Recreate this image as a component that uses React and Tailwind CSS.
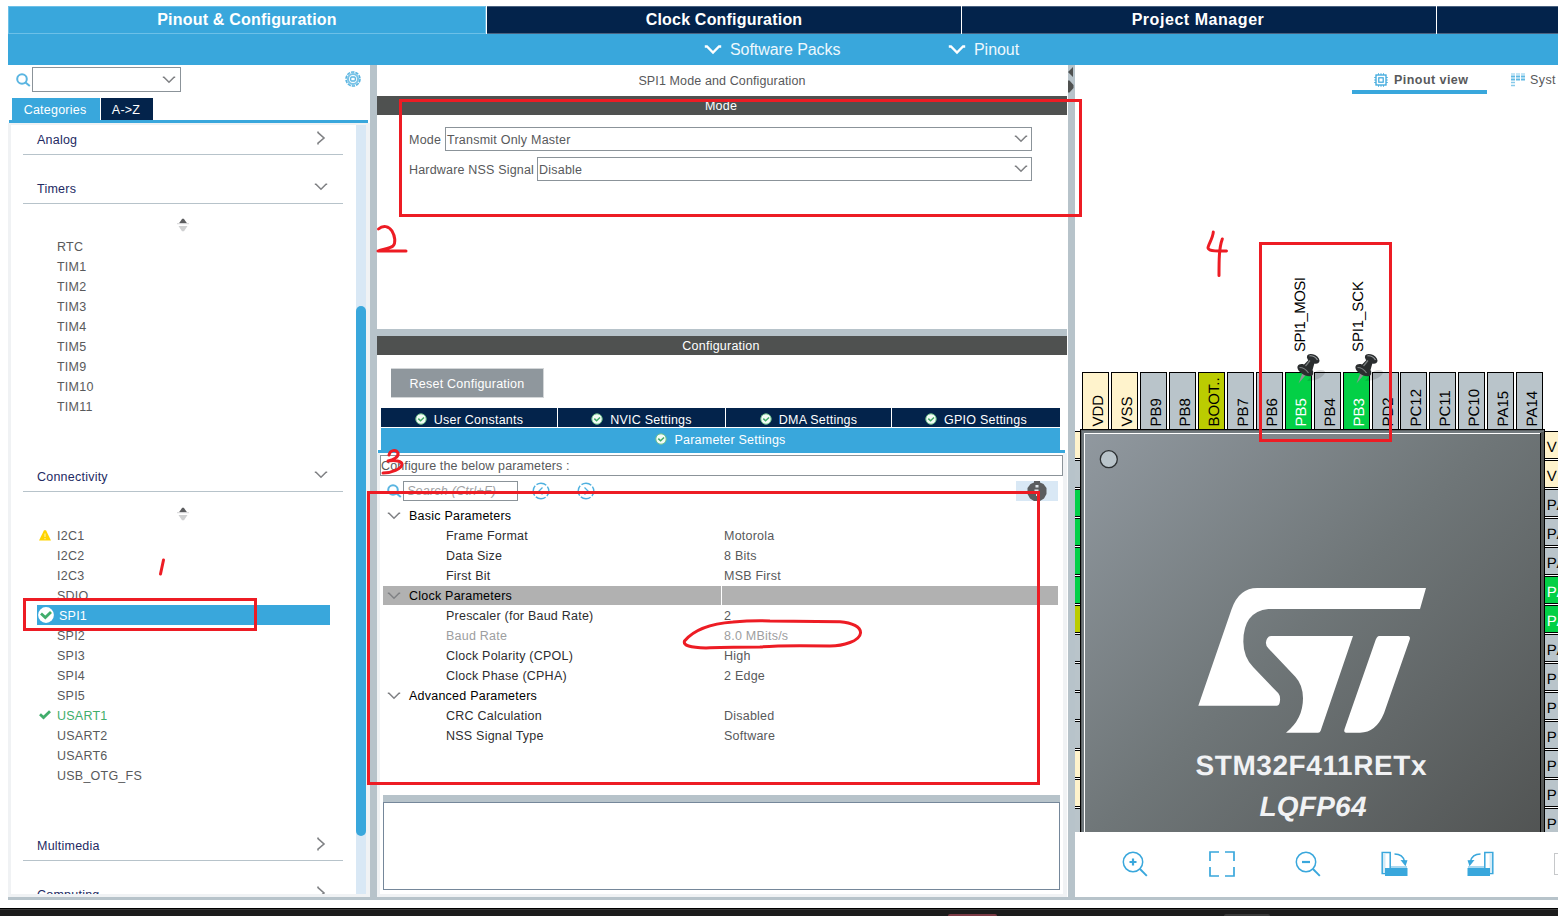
import React from "react";

const cx = (...c) => c.filter(Boolean).join(" ");

/* ---------- small icons ---------- */

const ChevronDown = ({ className = "text-[#808285]" }) => (
  <svg width="14" height="8" viewBox="0 0 14 8" className={cx("shrink-0", className)} fill="none" stroke="currentColor" strokeWidth="1.5">
    <path d="M.8 1.200h1.200L7 6.300 12 1.200h1.200" />
  </svg>
);

const ChevronRight = () => (
  <svg width="9" height="14" viewBox="0 0 9 14" className="shrink-0 text-[#808285]" fill="none" stroke="currentColor" strokeWidth="1.6">
    <path d="M1 .6v1L7 7 1 12.2v1.2" />
  </svg>
);

const SearchIcon = () => (
  <svg width="15" height="14" viewBox="0 0 15 14" className="shrink-0" fill="none" stroke="#5ab5e1" strokeWidth="2">
    <circle cx="6" cy="6" r="4.8" />
    <path d="M9.500 9.400l4.300 3.600" />
  </svg>
);

const GearIcon = () => (
  <svg width="16" height="16" viewBox="0 0 16 16" fill="none" stroke="#5ab5e1">
    <circle cx="8" cy="8" r="7" strokeWidth="1.6" strokeDasharray="3.4 1" />
    <circle cx="8" cy="8" r="5" strokeWidth="2.2" strokeOpacity=".8" />
    <rect x="5.7" y="6" width="4.6" height="4" rx="1" strokeWidth="1.3" />
  </svg>
);

const SortIcon = () => (
  <svg width="12" height="14" viewBox="0 0 12 14">
    <path d="M2 5.2L5.2.8h1.6L10 5.2z" fill="#5d5e60" />
    <path d="M0 5.7h12" stroke="#d5d6d7" />
    <path d="M1.500 8h9L7 13.2H5z" fill="#cfd0d1" />
  </svg>
);

const WarningIcon = () => (
  <svg width="12" height="11" viewBox="0 0 12 11">
    <path d="M5 .3h2L12 10.600H0z" fill="#ffd400" />
    <path d="M6 3.500v3.500M6 8v1.300" stroke="#fff3a8" strokeWidth="1.100" />
  </svg>
);

const CheckIcon = () => (
  <svg width="12" height="10" viewBox="0 0 12 10" fill="none" stroke="#41ad6b" strokeWidth="2.800">
    <path d="M1 4.300l3.500 3.200L11 1.200" />
  </svg>
);

const CheckDisc = () => (
  <svg width="16" height="16" viewBox="0 0 16 16" fill="none">
    <circle cx="8" cy="8" r="7.900" fill="#fff" />
    <path d="M3 6.500l4.300 4L13 5" stroke="#41ad6b" strokeWidth="2.800" />
  </svg>
);

const TabCheck = () => (
  <svg width="12" height="12" viewBox="0 0 12 12" fill="none" className="shrink-0">
    <circle cx="6" cy="6" r="5.200" fill="#f2fbf4" stroke="#6fc18c" strokeWidth="1" />
    <path d="M3.300 5.600l2.300 2.200 3.400-3.300" stroke="#3fa866" strokeWidth="1.500" />
  </svg>
);

const NavCircle = ({ next, className }) => (
  <svg width="18" height="18" viewBox="0 0 18 18" fill="none" stroke="#4eb0df" className={cx("shrink-0", className)}>
    <circle cx="9" cy="9" r="7.800" strokeWidth="1.400" strokeDasharray="10.500 1.750" strokeDashoffset="5" />
    <path d={next ? "M7.500 5.500L11 9l-3.500 3.500" : "M10.500 5.500L7 9l3.500 3.500"} strokeWidth="1.300" />
  </svg>
);

const InfoIcon = () => (
  <svg width="20" height="20" viewBox="0 0 20 20">
    <path d="M7 0h6v1.500l3.500 1.500L19.500 7v6L17 17.500 13 20H7L3 17.500.5 13V7L3.500 3 7 1.500z" fill="#5b5d5f" />
    <path d="M8.500 4h3v2.500h-3zM7.500 8.500h4V15H9V10H7.500z" fill="#dfe5ea" />
  </svg>
);

const ChipIcon = () => (
  <svg width="14" height="14" viewBox="0 0 14 14" fill="none" stroke="#39a7dc">
    <rect x="2" y="2" width="10" height="10" strokeWidth="1.300" />
    <rect x="4.800" y="4.800" width="4.400" height="4.400" strokeWidth="1.200" />
    <path d="M4.500 0v2M7 0v2M9.500 0v2M4.500 12v2M7 12v2M9.500 12v2M0 4.500h2M0 7h2M0 9.500h2M12 4.500h2M12 7h2M12 9.500h2" strokeWidth="1" strokeOpacity=".7" />
  </svg>
);

const SystemIcon = () => (
  <svg width="14" height="14" viewBox="0 0 14 14" stroke="#39a7dc" fill="none">
    <path d="M0 1h14" strokeWidth="1.400" strokeOpacity=".4" strokeDasharray="4 1" />
    <path d="M0 3.500h14M0 6.500h14" strokeWidth="1.800" strokeOpacity=".8" strokeDasharray="4 1" />
    <path d="M0 9.500h4M0 12.500h4" strokeWidth="1.600" strokeOpacity=".6" />
  </svg>
);

const ZoomGlyph = ({ plus }) => (
  <svg width="26" height="26" viewBox="0 0 26 26" fill="none" stroke="#39a7dc">
    <circle cx="11" cy="11" r="9.700" strokeWidth="1.500" />
    <path d="M18 18l6.800 6.800" strokeWidth="1.900" />
    <path d={plus ? "M7.500 11h7M11 7.500v7" : "M7 11h8"} strokeWidth="2.200" />
  </svg>
);

const FitGlyph = () => (
  <svg width="26" height="26" viewBox="0 0 26 26" fill="none" stroke="#39a7dc" strokeWidth="1.700">
    <path d="M1 10V1h9M16 1h9v9M25 16v9h-9M10 25H1v-9" />
  </svg>
);

const RotateGlyph = ({ flip }) => (
  <svg width="27" height="26" viewBox="0 0 27 26" fill="none" className={flip ? "-scale-x-100" : ""}>
    <rect x="10" y="15" width="16" height="3" fill="#a9d8f0" />
    <rect x="1.200" y="1.500" width="8" height="21" stroke="#39a7dc" strokeWidth="1.500" />
    <rect x="2" y="2.500" width="2.500" height="19" fill="#d4ebf7" />
    <rect x="4" y="17" width="22.500" height="8" fill="#39a7dc" />
    <path d="M13.500 3c5.500 0 9 2.500 10 7.500" stroke="#39a7dc" strokeWidth="1.500" />
    <path d="M19.500 9l7 .2-2 6z" fill="#39a7dc" />
  </svg>
);

/* ---------- header ---------- */

const Header = () => (
  <header className="ml-2 shrink-0 pt-1.5 text-white">
    <nav className="flex h-7 gap-px text-base font-bold tracking-[0.2px]">
      <div className="flex w-[478px] items-center justify-center border border-[#6cc0e8] bg-[#39a7dc]">Pinout &amp; Configuration</div>
      <div className="flex w-[474px] items-center justify-center border-y border-[#4a6280] bg-[#03234b]">Clock Configuration</div>
      <div className="flex w-[474px] items-center justify-center border-y border-[#4a6280] bg-[#03234b] pr-0.5 tracking-[0.55px]">Project Manager</div>
      <div className="flex-1 border-y border-[#4a6280] bg-[#03234b]" />
    </nav>
    <div className="flex h-[31px] items-center bg-[#39a7dc] pl-[696px] text-base tracking-[-0.05px]">
      <Drop label="Software Packs" className="w-[244px]" />
      <Drop label="Pinout" />
    </div>
  </header>
);

const Drop = ({ label, className }) => (
  <div className={cx("flex items-center gap-2 text-[#eef8fd]", className)}>
    <svg width="18" height="11" viewBox="0 0 18 11" fill="none" stroke="#fff" strokeWidth="2.300">
      <path d="M.8 2.500h2.200l6 6 6-6h2.200" />
    </svg>
    <span>{label}</span>
  </div>
);

/* ---------- category tree ---------- */

const TIMERS = ["RTC", "TIM1", "TIM2", "TIM3", "TIM4", "TIM5", "TIM9", "TIM10", "TIM11"];
const CONNECTIVITY = [
  ["I2C1", "warn"], ["I2C2"], ["I2C3"], ["SDIO"], ["SPI1", "selected"], ["SPI2"], ["SPI3"],
  ["SPI4"], ["SPI5"], ["USART1", "ok"], ["USART2"], ["USART6"], ["USB_OTG_FS"],
];

const Category = ({ label, open, className }) => (
  <div className={cx("ml-3 flex h-[30px] w-[320px] shrink-0 items-center justify-between border-b border-[#b7c3ca] pl-3.5 text-[#232a63]", className)}>
    <span>{label}</span>
    <span className={cx("mb-1 flex justify-center", open ? "mr-[15px]" : "mr-[17px]")}>{open ? <ChevronDown /> : <ChevronRight />}</span>
  </div>
);

const Peripheral = ({ label, state }) => (
  <li
    className={cx(
      "ml-[26px] flex h-5 w-[293px] items-center",
      state === "selected" && "bg-[#39a7dc] text-white",
      state === "ok" && "text-[#41ad6b]"
    )}
  >
    <span className={cx("flex shrink-0", state === "selected" ? "w-[22px] pl-px" : "w-5 pl-0.5")}>
      {state === "warn" && <WarningIcon />}
      {state === "selected" && <CheckDisc />}
      {state === "ok" && <CheckIcon />}
    </span>
    <span className="pt-px">{label}</span>
  </li>
);

const Sidebar = () => (
  <aside className="flex w-[362px] shrink-0 flex-col">
    <div className="flex h-[33px] items-start pl-2 pt-0.5">
      <div className="mt-[6px] flex w-4"><SearchIcon /></div>
      <div className="flex h-[25px] w-[149px] items-center justify-end border border-[#8b9399] pr-1">
        <ChevronDown />
      </div>
      <div className="ml-[164px] mt-1"><GearIcon /></div>
    </div>
    <div className="ml-1 flex h-[22px] gap-px text-white">
      <div className="flex w-[88px] items-center justify-center bg-[#39a7dc] pr-0.5 pt-px">Categories</div>
      <div className="flex w-[52px] items-center justify-center bg-[#03234b] pr-0.5 pt-px">A-&gt;Z</div>
    </div>
    <div className="ml-px h-[3px] w-[359px] shrink-0 bg-[#39a7dc]" />
    <div className="flex min-h-0 flex-1 border-x-[3px] border-b-[3px] border-t-2 border-r-4 border-[#f0f2f4]">
      <div className="flex min-w-0 flex-1 flex-col overflow-hidden">
        <Category label="Analog" />
        <Category label="Timers" open className="mt-[19px]" />
        <div className="flex h-8 shrink-0 justify-center pr-0.5 pt-3.5"><SortIcon /></div>
        <ul className="shrink-0">{TIMERS.map((t) => <Peripheral key={t} label={t} />)}</ul>
        <Category label="Connectivity" open className="mt-[46px]" />
        <div className="flex h-[33px] shrink-0 justify-center pr-0.5 pt-[15px]"><SortIcon /></div>
        <ul className="shrink-0">{CONNECTIVITY.map(([t, s]) => <Peripheral key={t} label={t} state={s} />)}</ul>
        <Category label="Multimedia" className="mt-[46px]" />
        <Category label="Computing" className="mt-[19px]" />
      </div>
      <div className="w-2.5 bg-[#d9e8f5] pt-[181px]">
        <div className="h-[530px] rounded-full bg-[#39a7dc]" />
      </div>
    </div>
  </aside>
);

/* ---------- SPI1 settings ---------- */

const BarTitle = ({ children }) => (
  <div className="flex h-[19px] shrink-0 items-center justify-center bg-[#4f5150] pr-0.5 text-white">{children}</div>
);

const SelectRow = ({ label, value, labelClass }) => (
  <div className="flex h-6 items-center">
    <span className={cx("shrink-0 whitespace-nowrap pt-px", labelClass)}>{label}</span>
    <div className="flex h-full flex-1 items-center justify-between border border-[#8b9399] pl-px pr-[3px]">
      <span className="pt-px">{value}</span>
      <ChevronDown />
    </div>
  </div>
);

const PARAMS = [
  { group: "Basic Parameters" },
  { name: "Frame Format", value: "Motorola" },
  { name: "Data Size", value: "8 Bits" },
  { name: "First Bit", value: "MSB First" },
  { group: "Clock Parameters", active: true },
  { name: "Prescaler (for Baud Rate)", value: "2" },
  { name: "Baud Rate", value: "8.0 MBits/s", disabled: true },
  { name: "Clock Polarity (CPOL)", value: "High" },
  { name: "Clock Phase (CPHA)", value: "2 Edge" },
  { group: "Advanced Parameters" },
  { name: "CRC Calculation", value: "Disabled" },
  { name: "NSS Signal Type", value: "Software" },
];

const ParamRow = ({ p }) =>
  p.group ? (
    <div className={cx("mb-px flex h-[19px] items-center text-black", p.active && "bg-[#b1b1b1]")}>
      <div className={cx("flex h-full w-[339px] items-center gap-2 border-r pl-1", p.active ? "border-white" : "border-transparent")}>
        <ChevronDown />
        {p.group}
      </div>
    </div>
  ) : (
    <div className={cx("flex h-5 items-center", p.disabled ? "text-[#9d9ea0]" : "text-[#2d2d2f]")}>
      <span className="w-[341px] pl-[63px]">{p.name}</span>
      <span className={p.disabled ? "" : "text-[#58595b]"}>{p.value}</span>
    </div>
  );

const TABS = [["User Constants", "w-44"], ["NVIC Settings", "w-[167px]"], ["DMA Settings", "w-[165px]"], ["GPIO Settings", "w-[168px]"]];

const Settings = () => (
  <section className="flex w-[691px] shrink-0 flex-col pr-px">
    <div className="flex h-[31px] items-center justify-center tracking-[0.12px]">SPI1 Mode and Configuration</div>
    <BarTitle>Mode</BarTitle>
    <div className="flex h-[214px] shrink-0 flex-col gap-1.5 pl-8 pr-[35px] pt-3">
      <SelectRow label="Mode" value="Transmit Only Master" labelClass="w-9" />
      <SelectRow label="Hardware NSS Signal" value="Disable" labelClass="w-32 tracking-[0.18px]" />
    </div>
    <div className="h-[7px] shrink-0 bg-[#b7c3ca]" />
    <BarTitle>Configuration</BarTitle>
    <div className="flex h-[53px] shrink-0 pl-3.5 pt-[13px]">
      <button className="flex h-[30px] w-[153px] items-center justify-center border border-l-0 border-[#d3d6d8] bg-[#8f979d] pt-px text-white">Reset Configuration</button>
    </div>
    <div className="ml-1 mr-[7px] flex h-[19px] shrink-0 gap-px text-white">
      {TABS.map(([t, w]) => (
        <div key={t} className={cx("flex items-center justify-center gap-[7px] bg-[#03234b] pt-[3px]", w)}>
          <TabCheck />
          <span className="pt-px">{t}</span>
        </div>
      ))}
    </div>
    <div className="ml-1 mr-[7px] mt-px flex h-[22px] shrink-0 items-center justify-center gap-[7px] bg-[#39a7dc] text-white">
      <TabCheck />
      <span className="pt-px">Parameter Settings</span>
    </div>
    <div className="ml-px mr-0.5 h-[3px] shrink-0 bg-[#39a7dc]" />
    <div className="flex min-h-0 flex-1 flex-col border-b-[3px] border-l-[3px] border-r-4 border-[#f0f2f4] pt-0.5">
      <div className="flex h-[21px] shrink-0 items-center border border-[#8b9399] tracking-[0.12px]">Configure the below parameters :</div>
      <div className="mt-[5px] flex h-5 shrink-0 items-center pl-[7px]">
        <SearchIcon />
        <div className="ml-px flex h-5 w-[115px] items-center border border-[#8b9399] pl-[3px] italic text-[#a0a2a4]">Search (Ctrl+F)</div>
        <NavCircle className="ml-3.5" />
        <NavCircle next className="ml-[27px]" />
        <div className="ml-auto mr-[5px] flex h-5 w-[42px] items-center justify-center bg-[#d9e8f5]"><InfoIcon /></div>
      </div>
      <div className="ml-[3px] mr-[5px] mt-[5px] h-[289px] shrink-0">
        {PARAMS.map((p) => <ParamRow key={p.group || p.name} p={p} />)}
      </div>
      <div className="ml-[3px] mr-[3px] h-[7px] shrink-0 bg-[#b7c3ca]" />
      <div className="ml-[3px] mr-[3px] h-[88px] shrink-0 border border-[#75879a]" />
    </div>
  </section>
);

/* ---------- pinout drawing ---------- */

const GRAY = "#b9c4ca";
const CREAM = "#fff3cc";
const GREEN = "#03d046";
const OLIVE = "#bbcc01";

const TOP_PINS = [
  ["VDD", CREAM], ["VSS", CREAM], ["PB9", GRAY], ["PB8", GRAY], ["BOOT..", OLIVE], ["PB7", GRAY], ["PB6", GRAY], ["PB5", GREEN],
  ["PB4", GRAY], ["PB3", GREEN], ["PD2", GRAY], ["PC12", GRAY], ["PC11", GRAY], ["PC10", GRAY], ["PA15", GRAY], ["PA14", GRAY],
];
const RIGHT_PINS = [
  ["VDD", CREAM], ["VSS", CREAM], ["PA13", GRAY], ["PA12", GRAY], ["PA11", GRAY], ["PA10", GREEN], ["PA9", GREEN],
  ["PA8", GRAY], ["PC9", GRAY], ["PC8", GRAY], ["PC7", GRAY], ["PC6", GRAY], ["PB15", GRAY], ["PB14", GRAY],
];
const LEFT_PINS = [CREAM, GRAY, GREEN, GREEN, GREEN, GREEN, OLIVE, GRAY, GRAY, GRAY, GRAY, CREAM, CREAM, GRAY];

const Pushpin = ({ x }) => (
  <g transform={`translate(${x} 353)`}>
    <path d="M9 28l9-10c4-2 9-1 9 1 0 4-8 9-18 9z" fill="#000" opacity=".13" />
    <path d="M.5 30.500L5 18.500l4 2z" fill="#8f9495" />
    <path d="M-.5 13.500c1-2.500 4-3 6.500-2L11.500 6l5 4-2 7c1.500 2.500 1 5-1 6-3 1-8-.5-11-3.500C0 17.500-1 15 -.5 13.500z" fill="#2a2d2e" />
    <ellipse cx="15.200" cy="5.800" rx="6.800" ry="4.200" transform="rotate(28 15.200 5.800)" fill="#2b2e30" />
    <path d="M11.500 2.800c3-.3 6.500 1.700 8 4.200" stroke="#9a9ea0" strokeWidth="1.200" fill="none" />
    <path d="M7.500 13l4.500-5.500M1.500 14.500c3 0 7 2.500 9 5.500" stroke="#7c8082" strokeWidth="1.200" fill="none" />
  </g>
);

const Pinout = () => (
  <svg className="block shrink-0 tracking-normal" width="483" height="732" viewBox="1075 100 483 732" fontFamily="'Liberation Sans', sans-serif" fontSize="15" textRendering="geometricPrecision">
    <defs>
      <linearGradient id="die" gradientUnits="userSpaceOnUse" x1="1080" y1="430" x2="1545" y2="895">
        <stop offset="0" stopColor="#9199a0" />
        <stop offset=".45" stopColor="#6f7678" />
        <stop offset="1" stopColor="#4d4f4e" />
      </linearGradient>
    </defs>
    <g shapeRendering="crispEdges">
      {TOP_PINS.map(([label, fill], i) => (
        <rect key={label} x={Math.round(1082 + i * 28.95) + 0.5} y="372.5" width="26" height="60" fill={fill} stroke="#000" />
      ))}
      {LEFT_PINS.map((fill, i) => (
        <rect key={i} x="1060.5" y={431.500 + i * 29} width="26" height="27" fill={fill} stroke="#000" />
      ))}
      {RIGHT_PINS.map(([label, fill], i) => (
        <rect key={label} x="1540.5" y={431.500 + i * 29} width="60" height="27" fill={fill} stroke="#000" />
      ))}
      <rect x="1080.5" y="429.5" width="464" height="464" fill="url(#die)" stroke="#000" />
      <path d="M1082.500 893V431.500H1543" stroke="#5e6365" strokeWidth="3" fill="none" />
      <path d="M1082.500 893V432H1543" stroke="#727a7e" strokeWidth="2" fill="none" />
      <path d="M1084.500 893V433.500H1540" stroke="#fff" fill="none" />
      <path d="M1542.500 432V893" stroke="#555857" strokeWidth="3" />
      <path d="M1540.500 433V893" stroke="#000" />
    </g>
    {TOP_PINS.map(([label, fill], i) => (
      <text key={label} transform={`translate(${Math.round(1082 + i * 28.95) + 20.5} 426.500) rotate(-90)`} fill={fill === GREEN ? "#fff" : "#000"}>{label}</text>
    ))}
    {RIGHT_PINS.map(([label, fill], i) => (
      <text key={label} x="1546.800" y={451.800 + i * 29} letterSpacing=".7" fill={fill === GREEN ? "#fff" : "#000"}>{label}</text>
    ))}
    <text transform="translate(1305 352) rotate(-90)" textLength="75">SPI1_MOSI</text>
    <text transform="translate(1363 352) rotate(-90)" textLength="71">SPI1_SCK</text>
    <Pushpin x={1298} />
    <Pushpin x={1356} />
    <circle cx="1108.800" cy="459.200" r="8.500" fill="#b9c4ca" stroke="#2c3032" strokeWidth="1.300" />
    <g transform="translate(1060 560) scale(.33333)" fill="#fff">
      <path d="M415 437L515 147Q537 84 592 84H1098L1080 147H625Q550 155 550 245Q550 290 580 322L655 400Q663 410 659 428Q657 437 650 437Z" />
      <path d="M633 228H879L782 512Q780 518 774 518H678Q729 478 729 415Q729 375 706 350L625 265Q612 250 622 235Q626 228 633 228Z" />
      <path d="M958 228H1045Q1051 230 1050 236L972 460Q948 518 900 518H858Q850 516 854 506L945 245Q950 228 958 228Z" />
    </g>
    <text x="1311" y="775" fontSize="28" fontWeight="bold" fill="#f1f2f4" textAnchor="middle" textLength="231">STM32F411RETx</text>
    <text x="1313" y="816" fontSize="28" fontWeight="bold" fontStyle="italic" fill="#f1f2f4" textAnchor="middle" textLength="107">LQFP64</text>
  </svg>
);

const PinoutPane = () => (
  <section className="flex min-w-0 flex-1 flex-col overflow-hidden">
    <div className="flex h-[35px] shrink-0 items-start pl-[277px]">
      <div className="flex h-[29px] w-[135px] shrink-0 items-center gap-1.5 border-b-4 border-[#39a7dc] pl-[22px] pt-[5px] font-bold tracking-[0.45px]">
        <ChipIcon />
        <span className="whitespace-nowrap">Pinout view</span>
      </div>
      <div className="ml-6 flex h-[29px] shrink-0 items-center gap-[5px] pt-px tracking-[0.4px]">
        <SystemIcon />
        <span className="whitespace-nowrap">Syst</span>
      </div>
    </div>
    <Pinout />
    <div className="flex h-[65px] shrink-0 items-center pb-0.5 pl-[47px]">
      <div className="w-[87px] shrink-0"><ZoomGlyph plus /></div>
      <div className="w-[86px] shrink-0"><FitGlyph /></div>
      <div className="w-[86px] shrink-0"><ZoomGlyph /></div>
      <div className="w-[86px] shrink-0"><RotateGlyph /></div>
      <div className="w-[87px] shrink-0"><RotateGlyph flip /></div>
      <div className="h-[22px] w-5 shrink-0 border border-[#c6c8ca]" />
    </div>
  </section>
);

/* ---------- red pen marks ---------- */

const Marks = () => (
  <svg className="pointer-events-none absolute inset-0" width="1558" height="916" viewBox="0 0 1558 916" fill="none" stroke="#ed1c24" strokeWidth="3" strokeLinecap="round" strokeLinejoin="round">
    <g strokeLinejoin="miter">
      <rect x="24.500" y="599.500" width="231" height="30" />
      <rect x="400.500" y="100.500" width="680" height="115" />
      <rect x="368.500" y="492.500" width="670" height="291" />
      <rect x="1260.500" y="243.500" width="130" height="197" />
    </g>
    <path d="M163.500 560L160.500 574" />
    <path d="M378.500 229C383 225 389 226 392 231C395 236 396 243 393 246C389 249 382 249 378 251H406" />
    <path d="M389 455C390 450 396 449 398 453C399 457 393 460 388 461C395 460 402 461 402 464C402 469 391 473 383 473" />
    <path d="M1213.300 232C1213 238 1208 245 1208 248C1209 252 1218 250.500 1226.500 251M1222.300 239C1219 248 1219 260 1219 275.500" />
    <path d="M733 622C745 621 756 620.500 770 621L840 621.700C852 622.500 861 627 860.500 633C860 641 843 646 830 646C805 645.500 780 645 760 647C740 647 720 647 706 648C690 647.500 683 645.500 684.500 641C692 632 706 624 733 622" />
  </svg>
);

export default function App() {
  return (
    <div className="relative flex h-[916px] w-[1558px] flex-col overflow-hidden bg-white font-['Liberation_Sans',Arial,sans-serif] text-[12.5px] leading-4 tracking-[0.23px] text-[#58595b]">
      <Header />
      <main className="ml-2 flex h-[832px] shrink-0">
        <Sidebar />
        <div className="w-[7px] shrink-0 bg-[#b7c3ca]" />
        <Settings />
        <div className="w-[7px] shrink-0 bg-[#b7c3ca] pt-0.5">
          <svg width="7" height="26" viewBox="0 0 7 26" fill="#4f5150">
            <path d="M5 0v10L0 5zM0 13.500h1.500L5.500 18v3L1.500 25.500H0z" />
          </svg>
        </div>
        <PinoutPane />
      </main>
      <div className="ml-2 h-[3px] shrink-0 bg-[#b7c3ca]" />
      <footer className="mt-2 flex flex-1 items-end border-t border-black bg-[#1c1c1c] shadow-[inset_0_1px_0_#3a3a3a]">
        <div className="ml-[948px] h-0.5 w-[49px] rounded-t-full bg-[#7b3a44]" />
        <div className="ml-[227px] h-0.5 w-[46px] rounded-t-full bg-[#3a3a3a]" />
      </footer>
      <Marks />
    </div>
  );
}
